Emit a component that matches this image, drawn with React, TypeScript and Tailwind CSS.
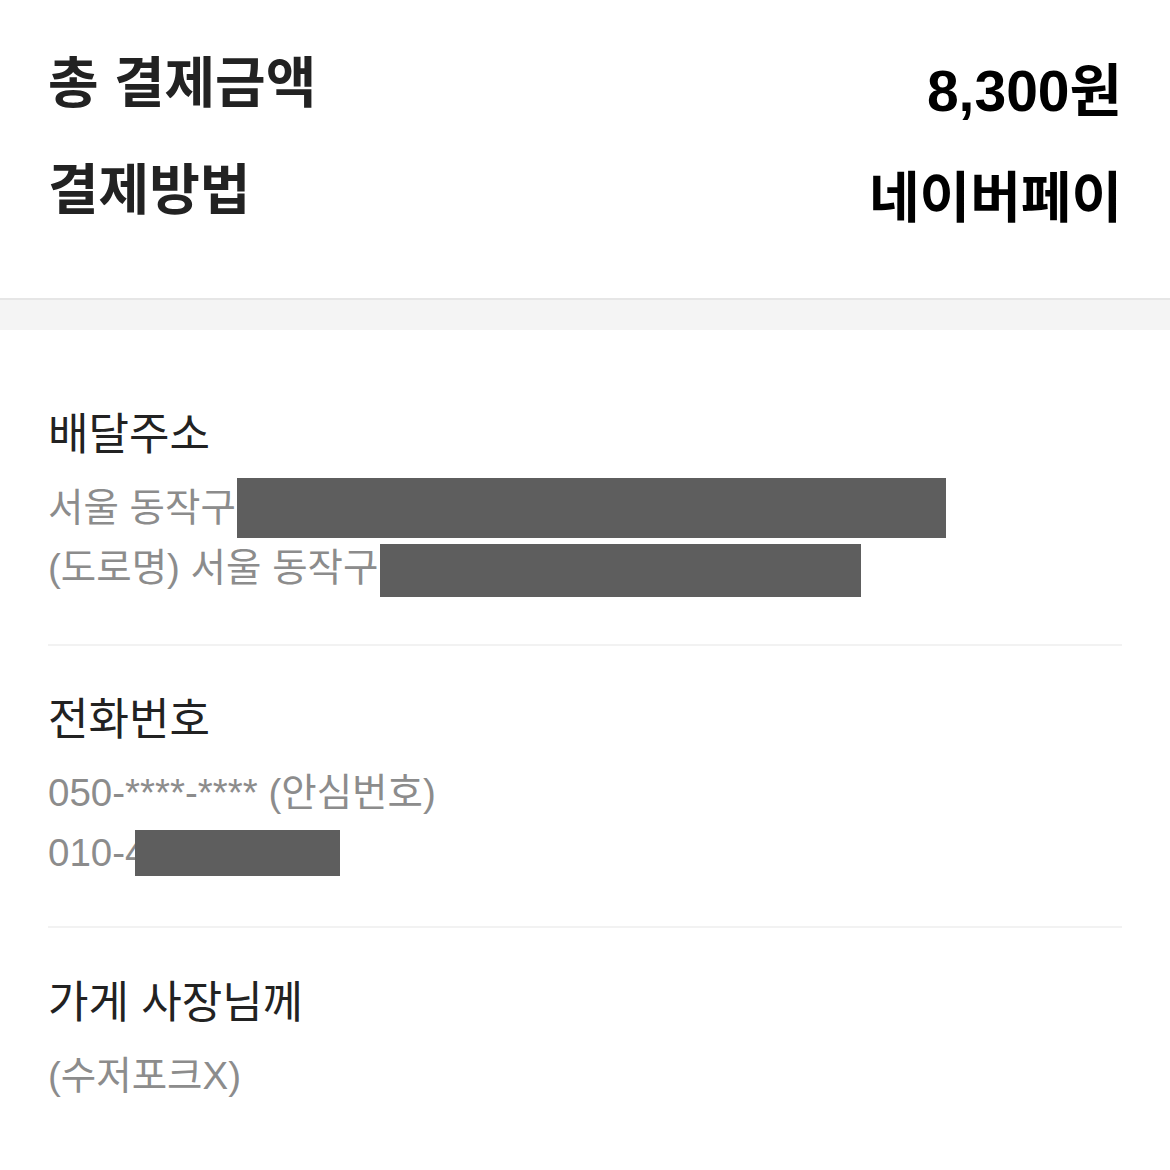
const font = { fontFamily: '"Liberation Sans", "Noto Sans CJK KR", sans-serif' };

const Redact = ({ className }: { className: string }) => (
  <span className={`inline-block bg-[#5e5e5e] ${className}`} />
);

const Section = ({ title, children, last, pb }: any) => (
  <div className="px-12">
    <div className={`${pb} ${last ? "" : "border-b-2 border-[#f2f2f2]"}`}>
      <div className="h-[60px] flex items-center text-[44px] text-[#222]">{title}</div>
      <div className="mt-[13px] text-[38.5px] text-[#8c8c8c]">{children}</div>
    </div>
  </div>
);

export default function App() {
  return (
    <div className="w-[1170px] min-h-[1170px] bg-white" style={font}>
      <div className="px-12 pt-[30px] pb-[54px] border-b-2 border-[#e6e6e6]">
        <div className="h-[107px] flex items-center justify-between">
          <span className="text-[55px] font-bold text-[#222]">총 결제금액</span>
          <span className="pt-[16px] text-[57px] font-bold text-black">8,300원</span>
        </div>
        <div className="h-[107px] flex items-center justify-between">
          <span className="text-[55px] font-bold text-[#222]">결제방법</span>
          <span className="pt-[16px] text-[55px] font-bold text-black">네이버페이</span>
        </div>
      </div>
      <div className="h-[30px] bg-[#f4f4f4]" />

      <div className="pt-[75px]">
        <Section title="배달주소" pb="pb-[46px]">
          <div className="h-[60px] flex items-center">
            <span>서울 동작구</span>
            <Redact className="ml-[1px] w-[709px] h-[60px]" />
          </div>
          <div className="h-[60px] flex items-end">
            <span className="self-center">(도로명) 서울 동작구</span>
            <Redact className="ml-[2px] mb-[1px] w-[481px] h-[53px]" />
          </div>
        </Section>
      </div>

      <div className="pt-[44px]">
        <Section title="전화번호" pb="pb-[43px]">
          <div className="h-[60px] flex items-center">050-****-**** (안심번호)</div>
          <div className="h-[60px] flex items-center">
            <span>010-4</span>
            <Redact className="-ml-[11px] w-[205px] h-[46px]" />
          </div>
        </Section>
      </div>

      <div className="pt-[45px]">
        <Section title="가게 사장님께" last pb="pb-[44px]">
          <div className="h-[60px] flex items-center">(수저포크X)</div>
        </Section>
      </div>
    </div>
  );
}
